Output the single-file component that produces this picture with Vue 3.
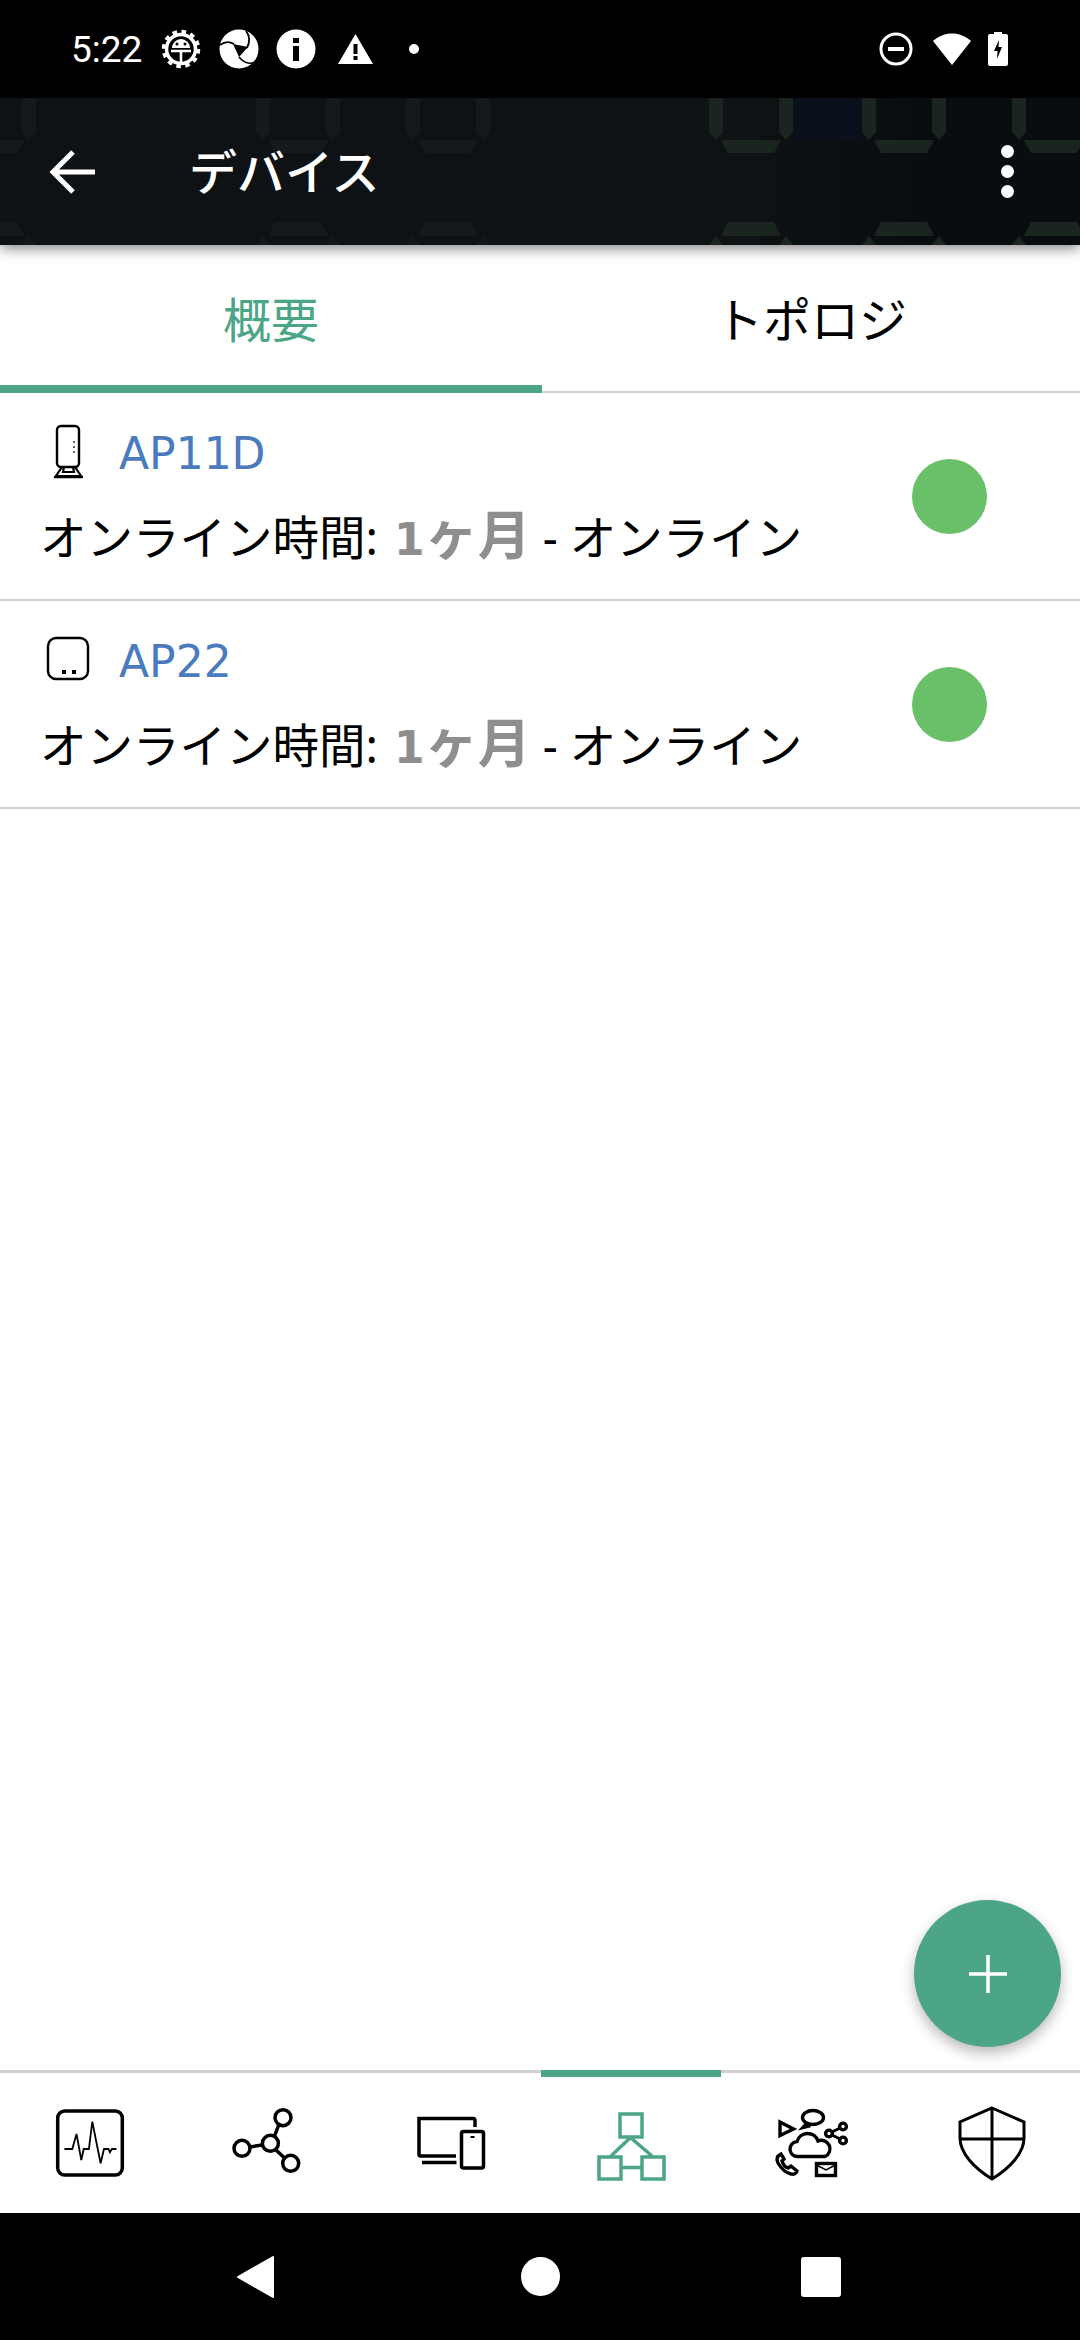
<template>
  <div class="screen">
    <div class="status-bar">
      <span class="time">5:22</span>
      <svg class="st-gear" width="40" height="40" viewBox="0 0 40 40">
        <circle cx="20" cy="20" r="14.500" fill="none" stroke="#fff" stroke-width="3.500" />
        <circle cx="20" cy="20" r="17.500" fill="none" stroke="#fff" stroke-width="3.500" stroke-dasharray="4.600 4.560" />
        <path d="M11 19a9 9 0 0 1 18 0z" fill="#fff" />
        <path d="M10 22h20M20 22v11" fill="none" stroke="#fff" stroke-width="2.600" />
        <circle cx="16" cy="15" r="1.500" fill="#000" />
        <circle cx="24" cy="15" r="1.500" fill="#000" />
      </svg>
      <svg class="st-shutter" width="40" height="40" viewBox="0 0 40 40">
        <circle cx="20" cy="20" r="19.500" fill="#fff" />
        <path d="M14 15 L29 18 L20 28z" fill="#000" />
        <path d="M15 15C10 12 5 13 1 16M28 19C31 13 31 7 27 2M20 28C24 33 30 36 36 33" fill="none" stroke="#000" stroke-width="1.800" />
      </svg>
      <svg class="st-info" width="40" height="40" viewBox="0 0 40 40">
        <circle cx="20" cy="20" r="19.500" fill="#fff" />
        <rect x="17" y="9" width="6" height="5" fill="#000" />
        <rect x="17" y="17" width="6" height="15" fill="#000" />
      </svg>
      <svg class="st-warn" width="35" height="32" viewBox="0 0 35 32">
        <path d="M17.500 1 L35 31 H0z" fill="#fff" />
        <rect x="15.500" y="11" width="4" height="10" fill="#000" />
        <rect x="15.500" y="23" width="4" height="4" fill="#000" />
      </svg>
      <span class="st-dot"></span>
      <span class="spacer"></span>
      <svg class="st-dnd" width="34" height="34" viewBox="0 0 34 34">
        <circle cx="17" cy="17" r="15" fill="none" stroke="#fff" stroke-width="3" />
        <rect x="9" y="15" width="16" height="4" fill="#fff" />
      </svg>
      <svg class="st-wifi" width="40" height="34" viewBox="0 0 40 34">
        <path d="M20 33 L1 9 C12 -1 28 -1 39 9z" fill="#fff" />
      </svg>
      <svg class="st-batt" width="20" height="34" viewBox="0 0 20 34">
        <path d="M6 0h8v2h4a2 2 0 0 1 2 2v28a2 2 0 0 1-2 2H2a2 2 0 0 1-2-2V4a2 2 0 0 1 2-2h4z" fill="#fff" />
        <path d="M11 8 L6 19 H9.500 L9 27 L14 15 H10.500z" fill="#000" />
      </svg>
    </div>

    <header class="app-bar">
      <svg class="pattern" width="1080" height="147" viewBox="0 0 1080 147">
        <defs>
          <linearGradient id="barShade" x1="0" x2="1" y1="0" y2="0">
            <stop offset="0.7" stop-color="#0e1214" />
            <stop offset="0.85" stop-color="#0a0d10" />
          </linearGradient>
        </defs>
        <rect width="1080" height="147" fill="url(#barShade)" />
        <rect x="793" width="69" height="42" fill="#0b111c" />
        <g v-for="c in columns" :key="c.x" :fill="c.fill">
          <path :d="`M${c.x} 0h14v34l-7 8-7-8z`" />
          <path :d="`M${c.x + 70} 0h14v34l-7 8-7-8z`" />
          <path :d="`M${c.x + 12} 42h60l-7 13h-46z`" />
          <path :d="`M${c.x + 19} 124h46l7 14h-60z`" />
          <path :d="`M${c.x} 147l7-9 7 9zM${c.x + 70} 147l7-9 7 9z`" />
        </g>
      </svg>
      <svg class="back" width="48" height="48" viewBox="0 0 48 48">
        <path d="M46 24H5M24 4 4 24l20 20" fill="none" stroke="#fff" stroke-width="5" />
      </svg>
      <span class="title">デバイス</span>
      <span class="spacer"></span>
      <div class="more"><i></i><i></i><i></i></div>
    </header>

    <div class="tabs">
      <div class="tab active">概要</div>
      <div class="tab">トポロジ</div>
    </div>

    <main class="content">
      <div v-for="d in devices" :key="d.name" class="row">
        <div class="row-text">
          <div class="name-line">
            <svg v-if="d.type === 'tower'" class="dev-icon" width="60" height="60" viewBox="0 -2 60 60">
              <rect x="19" y="3" width="22" height="41" rx="4" fill="none" stroke="#000" stroke-width="2.400" />
              <path d="M36 18v2M36 23v2M36 28v2" stroke="#000" stroke-width="1.200" />
              <path d="M24 44 18 53h25l-6-9M26 44l-1 5h11l-1-5" fill="none" stroke="#000" stroke-width="2.200" />
              <path d="M17 54h27" stroke="#000" stroke-width="2.400" stroke-linecap="round" />
            </svg>
            <svg v-else class="dev-icon" width="60" height="60" viewBox="0 0 60 60">
              <rect x="10" y="9" width="40" height="41" rx="8" fill="none" stroke="#000" stroke-width="2.400" />
              <rect x="24" y="41" width="4" height="4" fill="#000" />
              <rect x="34" y="41" width="4" height="4" fill="#000" />
            </svg>
            <span class="name">{{ d.name }}</span>
          </div>
          <div class="uptime">オンライン時間: <b class="dur"><span class="num">1</span>ヶ月</b> - オンライン</div>
        </div>
        <span class="led"></span>
      </div>

      <button class="fab">
        <svg width="40" height="40" viewBox="0 0 40 40">
          <path d="M20 1v38M1 20h38" stroke="#fff" stroke-width="3.500" />
        </svg>
      </button>
    </main>

    <nav class="bottom-nav">
      <div class="nav-item">
        <svg width="120" height="120" viewBox="30 2082 120 120" fill="none" stroke="#000">
          <rect x="57.700" y="2111" width="64.600" height="64" rx="7" stroke-width="3.500" />
          <path d="M64.400 2149H72.300L76.500 2134L81.300 2160L83.700 2149H88.900L92.300 2121.700L100.600 2163.300L104 2149H108.500L109.900 2152.300L111.900 2149H116.400" stroke-width="1.800" />
        </svg>
      </div>
      <div class="nav-item">
        <svg width="120" height="120" viewBox="210 2082 120 120" fill="none" stroke="#000" stroke-width="3.500">
          <circle cx="270.400" cy="2143.300" r="8" />
          <circle cx="283" cy="2117.700" r="8" />
          <circle cx="242" cy="2148.300" r="8" />
          <circle cx="290.700" cy="2163.300" r="8" />
          <path d="M274.500 2136l4-10.500M262 2145l-12 2M276 2150l8 7.500" />
        </svg>
      </div>
      <div class="nav-item">
        <svg width="120" height="120" viewBox="390 2082 120 120" fill="none" stroke="#000" stroke-width="3.500">
          <path d="M475 2127v-7a1.500 1.500 0 0 0-1.500-1.500H419v36a1.500 1.500 0 0 0 1.500 1.500h35.500M422 2162.500h34.500" />
          <rect x="461.500" y="2131.500" width="22" height="36.500" rx="2" />
          <path d="M470.500 2137h4" stroke-width="2" />
        </svg>
      </div>
      <div class="nav-item current">
        <svg width="120" height="120" viewBox="570 2082 120 120" fill="none" stroke="#4ca585" stroke-width="3.500">
          <rect x="620" y="2114" width="22" height="23" />
          <rect x="599" y="2157" width="22" height="22" />
          <rect x="642" y="2157" width="22" height="22" />
          <path d="M630 2138 611 2156M631 2138 652 2156M621 2167.500H642" />
        </svg>
      </div>
      <div class="nav-item">
        <svg width="120" height="120" viewBox="750 2082 120 120" fill="none" stroke="#000" stroke-width="3.400">
          <ellipse cx="813" cy="2117.500" rx="10.500" ry="7" />
          <path d="M806.500 2123.500l-3.500 4 7.500-2" />
          <path d="M780 2122l13.500 7-13.500 6.500z" />
          <circle cx="843" cy="2126.500" r="3.400" />
          <circle cx="829" cy="2133.500" r="3.400" />
          <circle cx="843" cy="2140.500" r="3.400" />
          <path d="M832 2132l8-4M832 2135l8 4" stroke-width="3" />
          <path d="M798 2156.500a7.500 7.500 0 0 1-1-15 11 11 0 0 1 21-.5 8.500 8.500 0 0 1 7 15.500z" />
          <path d="M781 2154c-4 2-5 5-3 9 3 5 8 10 13 11 3 1 6-1 6-3l-6-5-3 2c-3-1-5-4-6-7l2-2z" />
          <rect x="816.500" y="2163.500" width="19" height="12" />
          <path d="M816.500 2165l9.500 5 9.500-5" stroke-width="1.500" />
        </svg>
      </div>
      <div class="nav-item">
        <svg width="120" height="120" viewBox="930 2082 120 120" fill="none" stroke="#000" stroke-width="3">
          <path d="M992 2108 1024 2122v16c0 15-14 30-32 41-18-11-32-26-32-41v-16z" />
          <path d="M992 2108V2179M960 2139H1024" />
        </svg>
      </div>
    </nav>

    <div class="sys-nav">
      <svg width="40" height="44" viewBox="0 0 40 44">
        <path d="M37 2v40L2 22z" fill="#fff" stroke="#fff" stroke-width="2" stroke-linejoin="round" />
      </svg>
      <span class="home"></span>
      <span class="recent"></span>
    </div>
  </div>
</template>

<script setup>
const devices = [
  { name: 'AP11D', type: 'tower' },
  { name: 'AP22', type: 'box' }
]

// faint circuit pattern behind the app bar
const columns = [
  { x: -48, fill: '#14191b' },
  { x: 256, fill: '#14191b' },
  { x: 406, fill: '#14191b' },
  { x: 709, fill: '#1a251f' },
  { x: 862, fill: '#1a251f' },
  { x: 1012, fill: '#1a251f' }
]
</script>

<style>
html,
body {
  margin: 0;
  background: #fff;
}
</style>

<style scoped>
.screen {
  width: 1080px;
  height: 2340px;
  display: flex;
  flex-direction: column;
  font-family: "Noto Sans", "Noto Sans CJK JP", sans-serif;
  background: #fff;
  overflow: hidden;
}
.spacer {
  flex: 1;
}
.status-bar {
  height: 98px;
  flex: none;
  background: #000;
  display: flex;
  align-items: center;
  padding: 0 72px 0 71px;
  box-sizing: border-box;
  color: #fff;
}
.time {
  font-family: Roboto, sans-serif;
  font-size: 37px;
  width: 90px;
}
.st-shutter { margin-left: 18px; }
.st-info { margin-left: 17px; }
.st-warn { margin-left: 22px; }
.st-dot {
  width: 10px;
  height: 10px;
  border-radius: 50%;
  background: #fff;
  margin-left: 36px;
}
.st-wifi { margin-left: 19px; }
.st-batt { margin-left: 16px; }

.app-bar {
  position: relative;
  z-index: 2;
  height: 147px;
  flex: none;
  display: flex;
  align-items: center;
  padding: 0 66px 0 49px;
  box-sizing: border-box;
  background: #0e1214;
  box-shadow: 0 4px 12px rgba(0, 0, 0, 0.45);
}
.pattern {
  position: absolute;
  left: 0;
  top: 0;
}
.back,
.title,
.more {
  position: relative;
}
.title {
  margin-left: 92px;
  color: #fff;
  font-size: 48px;
  font-weight: 500;
  line-height: 60px;
}
.more i {
  display: block;
  width: 13px;
  height: 13px;
  margin: 7px 0;
  border-radius: 50%;
  background: #fff;
}

.tabs {
  height: 148px;
  flex: none;
  display: flex;
  border-bottom: 2px solid #d2d2d2;
  box-sizing: border-box;
}
.tab {
  width: 538px;
  box-sizing: border-box;
  text-align: center;
  font-size: 48px;
  line-height: 60px;
  padding-top: 45px;
  color: #000;
}
.tab.active {
  width: 542px;
  height: 148px;
  color: #4ca585;
  border-bottom: 8px solid #4ca585;
}

.content {
  position: relative;
  flex: 1;
}
.row {
  height: 208px;
  display: flex;
  align-items: center;
  box-sizing: border-box;
  border-bottom: 2px solid #d2d2d2;
  padding: 0 93px 0 38px;
}
.row-text {
  flex: 1;
}
.name-line {
  display: flex;
  align-items: center;
  gap: 21px;
  height: 60px;
  margin-bottom: 23px;
}
.name {
  padding-top: 5px;
  color: #4a7bbd;
  font-family: "DejaVu Sans", sans-serif;
  font-size: 44px;
  line-height: 60px;
}
.uptime {
  margin-left: 2px;
  font-size: 46.500px;
  line-height: 62px;
  color: #000;
  white-space: nowrap;
}
.dur {
  color: #8e8e8e;
  font-size: 53px;
  font-weight: 700;
}
.num {
  margin-left: 4px;
  font-family: "DejaVu Sans", sans-serif;
  font-size: 44px;
}
.led {
  width: 75px;
  height: 75px;
  flex: none;
  border-radius: 50%;
  background: #6abf69;
}
.fab {
  position: absolute;
  right: 19px;
  bottom: 23px;
  width: 147px;
  height: 147px;
  padding: 0;
  border: none;
  border-radius: 50%;
  background: #4ca585;
  display: flex;
  align-items: center;
  justify-content: center;
  box-shadow: 0 6px 14px rgba(0, 0, 0, 0.28);
}
.bottom-nav {
  height: 143px;
  flex: none;
  display: flex;
  background: #fff;
  border-top: 3px solid #d2d2d2;
  box-sizing: border-box;
}
.nav-item {
  flex: 1;
  display: flex;
  align-items: center;
  justify-content: center;
  margin-top: -3px;
  box-sizing: border-box;
  position: relative;
}
.nav-item.current::before {
  content: "";
  position: absolute;
  top: 0;
  left: 1px;
  width: 180px;
  height: 7px;
  background: #4ca585;
}
.sys-nav {
  height: 127px;
  flex: none;
  background: #000;
  display: flex;
  align-items: center;
  padding: 0 0 0 236px;
  box-sizing: border-box;
}
.home {
  width: 39px;
  height: 39px;
  border-radius: 50%;
  background: #fff;
  margin-left: 245px;
}
.recent {
  width: 40px;
  height: 40px;
  border-radius: 3px;
  background: #fff;
  margin-left: 241px;
}
</style>
